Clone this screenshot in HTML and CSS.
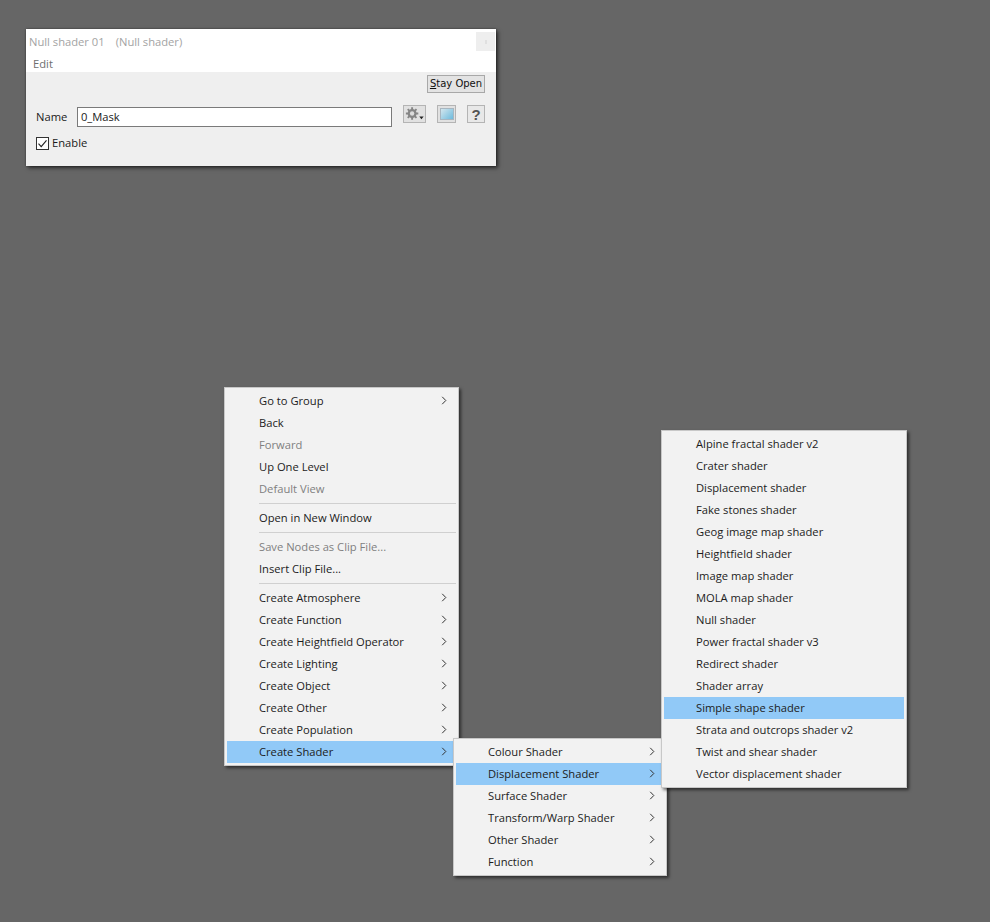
FILE: index.html
```html
<!DOCTYPE html>
<html lang="en">
<head>
<meta charset="utf-8">
<title>Null shader 01</title>
<link rel="stylesheet" href="styles.css">
</head>
<body>
<svg class="defs" width="0" height="0" aria-hidden="true">
  <symbol id="chev" viewBox="0 0 6 9"><path d="M1.2 .8 4.800 4.500 1.200 8.200" fill="none" stroke="#333" stroke-width="1"/></symbol>
</svg>

<section class="dialog">
  <header class="head">
    <div class="titlebar">
      <span class="title">Null shader 01</span>
      <span class="title title-type">(Null shader)</span>
      <span class="close"><span class="close-mark"></span></span>
    </div>
    <div class="menubar">Edit</div>
  </header>
  <div class="body">
    <div class="stay-row"><button class="stay"><u>S</u>tay Open</button></div>
    <div class="name-row">
      <label class="name-label">Name</label>
      <div class="name-input">0_Mask</div>
      <button class="tool tool-gear" aria-label="Settings">
        <svg width="22" height="16" viewBox="0 0 22 16">
          <circle cx="8.500" cy="7.500" r="4.700" fill="#858585"/>
          <path d="M8.500 1v13M2 7.500h13M3.900 2.900l9.200 9.200M13.100 2.900l-9.200 9.200" stroke="#858585" stroke-width="2"/>
          <circle cx="8.500" cy="7.500" r="2.300" fill="#dcdcdc"/>
          <path d="M16 10.500h4.600l-2.300 3z" fill="#222"/>
        </svg>
      </button>
      <button class="tool tool-image" aria-label="Preview"><span class="swatch"></span></button>
      <button class="tool tool-help">?</button>
    </div>
    <label class="enable">
      <svg class="check" width="13" height="13" viewBox="0 0 13 13">
        <rect x=".5" y=".5" width="12" height="12" fill="#fff" stroke="#333"/>
        <path d="M2.500 6.700 5.200 9.600 10.500 3.400" fill="none" stroke="#222" stroke-width="1.100"/>
      </svg>
      Enable
    </label>
  </div>
</section>

<nav class="menu menu-main">
  <div class="item">Go to Group<svg class="arrow"><use href="#chev"/></svg></div>
  <div class="item">Back</div>
  <div class="item off">Forward</div>
  <div class="item">Up One Level</div>
  <div class="item off">Default View</div>
  <div class="sep"></div>
  <div class="item">Open in New Window</div>
  <div class="sep"></div>
  <div class="item off">Save Nodes as Clip File...</div>
  <div class="item">Insert Clip File...</div>
  <div class="sep"></div>
  <div class="item">Create Atmosphere<svg class="arrow"><use href="#chev"/></svg></div>
  <div class="item">Create Function<svg class="arrow"><use href="#chev"/></svg></div>
  <div class="item">Create Heightfield Operator<svg class="arrow"><use href="#chev"/></svg></div>
  <div class="item">Create Lighting<svg class="arrow"><use href="#chev"/></svg></div>
  <div class="item">Create Object<svg class="arrow"><use href="#chev"/></svg></div>
  <div class="item">Create Other<svg class="arrow"><use href="#chev"/></svg></div>
  <div class="item">Create Population<svg class="arrow"><use href="#chev"/></svg></div>
  <div class="item on">Create Shader<svg class="arrow"><use href="#chev"/></svg></div>
</nav>

<nav class="menu menu-sub">
  <div class="item">Colour Shader<svg class="arrow"><use href="#chev"/></svg></div>
  <div class="item on">Displacement Shader<svg class="arrow"><use href="#chev"/></svg></div>
  <div class="item">Surface Shader<svg class="arrow"><use href="#chev"/></svg></div>
  <div class="item">Transform/Warp Shader<svg class="arrow"><use href="#chev"/></svg></div>
  <div class="item">Other Shader<svg class="arrow"><use href="#chev"/></svg></div>
  <div class="item">Function<svg class="arrow"><use href="#chev"/></svg></div>
</nav>

<nav class="menu menu-leaf">
  <div class="item">Alpine fractal shader v2</div>
  <div class="item">Crater shader</div>
  <div class="item">Displacement shader</div>
  <div class="item">Fake stones shader</div>
  <div class="item">Geog image map shader</div>
  <div class="item">Heightfield shader</div>
  <div class="item">Image map shader</div>
  <div class="item">MOLA map shader</div>
  <div class="item">Null shader</div>
  <div class="item">Power fractal shader v3</div>
  <div class="item">Redirect shader</div>
  <div class="item">Shader array</div>
  <div class="item on">Simple shape shader</div>
  <div class="item">Strata and outcrops shader v2</div>
  <div class="item">Twist and shear shader</div>
  <div class="item">Vector displacement shader</div>
</nav>
</body>
</html>
```

FILE: styles.css
```css
html, body {
  margin: 0;
  height: 100%;
}
body {
  position: relative;
  width: 990px;
  height: 922px;
  overflow: hidden;
  background: #666666;
  font-family: "Open Sans", "Noto Sans", "Liberation Sans", sans-serif;
  font-size: 11.2px;
  color: #1a1a1a;
}
.defs { position: absolute; }

/* Dialog window */
.dialog {
  position: absolute;
  left: 26px;
  top: 29px;
  width: 470px;
  height: 137px;
  display: flex;
  flex-direction: column;
  background: #f0f0f0;
  box-shadow: 2px 2px 4px rgba(0, 0, 0, .6), 0 0 2px rgba(0, 0, 0, .4);
}
.head {
  height: 43px;
  background: #fff;
  display: flex;
  flex-direction: column;
}
.titlebar {
  height: 24px;
  display: flex;
  align-items: center;
  gap: 11px;
  padding: 0 1px 0 3px;
  color: #a3a3a3;
}
.close {
  width: 19px;
  height: 19px;
  margin-left: auto;
  margin-top: 1px;
  background: #eeeeee;
  display: flex;
  align-items: center;
  justify-content: center;
}
.close-mark {
  width: 2px;
  height: 4px;
  background: #e0e0e0;
}
.menubar {
  padding-left: 7px;
  margin-top: 2px;
  color: #6e6e6e;
  line-height: 17px;
}
.body {
  flex: 1;
  background: #efefef;
  padding: 3px 11px 0 10px;
  display: flex;
  flex-direction: column;
}
.stay-row {
  display: flex;
  justify-content: flex-end;
}
.stay {
  width: 58px;
  height: 18px;
  padding: 0;
  border: 1px solid #a8a8a8;
  background: #e3e3e3;
  font-family: "DejaVu Sans", sans-serif;
  font-size: 10px;
  line-height: 16px;
  white-space: nowrap;
  color: #111;
}
.name-row {
  display: flex;
  align-items: flex-start;
  margin-top: 12px;
}
.name-label {
  width: 41px;
  line-height: 20px;
  margin-top: 2px;
}
.name-input {
  width: 311px;
  height: 18px;
  margin-top: 2px;
  padding-left: 3px;
  line-height: 18px;
  border: 1px solid #7a7a7a;
  background: #fff;
}
.tool {
  height: 18px;
  padding: 0;
  box-sizing: border-box;
  border: 1px solid #b4b4b4;
  background: #e1e1e1;
  display: flex;
  align-items: center;
  justify-content: center;
}
.tool-gear { width: 23px; margin-left: 11px; }
.tool-image { width: 19px; margin-left: 11px; }
.tool-help {
  width: 18px;
  margin-left: 11px;
  font: bold 15px "Liberation Sans", sans-serif;
  color: #555;
  background: #e8e8e8;
}
.swatch {
  width: 12px;
  height: 10px;
  border: 1px solid #a8b6c0;
  background: linear-gradient(135deg, #d3e6ee, #6ebbdd);
}
.enable {
  display: flex;
  align-items: center;
  gap: 3px;
  margin-top: 9px;
  line-height: 14px;
}
.check { flex: none; }

/* Popup menus */
.menu {
  position: absolute;
  box-sizing: border-box;
  padding: 2px;
  background: #f2f2f2;
  border: 1px solid #c8c8c8;
  box-shadow: 2px 2px 3px rgba(0, 0, 0, .55);
}
.menu-main { left: 224px; top: 387px; width: 235px; height: 379px; }
.menu-sub  { left: 453px; top: 738px; width: 214px; height: 138px; }
.menu-leaf { left: 661px; top: 430px; width: 246px; height: 358px; }

.item {
  position: relative;
  height: 22px;
  line-height: 21px;
  padding-left: 32px;
  color: #1c1c1c;
  white-space: nowrap;
}
.off { color: #7f7f7f; }
.on  { background: #91c9f7; }
.sep {
  height: 1px;
  margin: 3px 0 3px 32px;
  background: #d0d0d0;
}
.arrow {
  position: absolute;
  right: 9px;
  top: 6px;
  width: 6px;
  height: 9px;
}
```
